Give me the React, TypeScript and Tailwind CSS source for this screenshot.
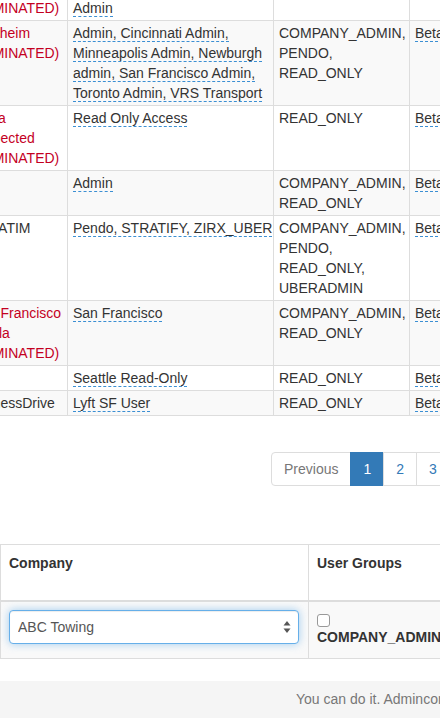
import React from "react";

type Row = { company: string[]; groups: string; roles: string[]; beta: boolean };

const rows: Row[] = [
  { company: ["(TERMINATED)"], groups: "Admin", roles: [], beta: false },
  {
    company: ["L. Anaheim", "(TERMINATED)"],
    groups: "Admin, Cincinnati Admin, Minneapolis Admin, Newburgh admin, San Francisco Admin, Toronto Admin, VRS Transport",
    roles: ["COMPANY_ADMIN", "PENDO", "READ_ONLY"],
    beta: true,
  },
  { company: ["Omaha", "Unexpected", "(TERMINATED)"], groups: "Read Only Access", roles: ["READ_ONLY"], beta: true },
  { company: [], groups: "Admin", roles: ["COMPANY_ADMIN", "READ_ONLY"], beta: true },
  { company: ["VERBATIM"], groups: "Pendo, STRATIFY, ZIRX_UBER", roles: ["COMPANY_ADMIN", "PENDO", "READ_ONLY", "UBERADMIN"], beta: true },
  { company: ["1 San Francisco", "Marcela", "(TERMINATED)"], groups: "San Francisco", roles: ["COMPANY_ADMIN", "READ_ONLY"], beta: true },
  { company: [], groups: "Seattle Read-Only", roles: ["READ_ONLY"], beta: true },
  { company: ["SlickinessDrive"], groups: "Lyft SF User", roles: ["READ_ONLY"], beta: true },
];

// names that are active companies are shown in the normal text colour
const active = ["VERBATIM", "SlickinessDrive"];

function Dashed({ children }: { children: React.ReactNode }) {
  return <span className="border-b border-dashed border-[#3b8fd3]">{children}</span>;
}

export default function App() {
  return (
    <div className="h-[718px] w-[440px] overflow-hidden bg-white font-['Liberation_Sans',Arial,sans-serif] text-[14px] leading-5 text-[#333]">
      <table className="-ml-[46px] -mt-[5px] w-[605px] table-fixed border-collapse">
        <colgroup>
          <col className="w-[113px]" />
          <col className="w-[206px]" />
          <col className="w-[136px]" />
          <col className="w-[150px]" />
        </colgroup>
        <tbody>
          {rows.map((row, i) => (
            <tr key={i} className={i % 2 === 1 ? "bg-[#f9f9f9]" : "bg-white"}>
              <td className="whitespace-nowrap border border-[#ddd] px-[5px] py-[2px] align-top text-[#c4001f]">
                {row.company.map((line, j) => (
                  <div key={j} className={active.includes(line) ? "text-[#333]" : ""}>
                    {line}
                  </div>
                ))}
              </td>
              <td className="border border-[#ddd] py-[2px] pl-[5px] pr-0 align-top">
                <Dashed>{row.groups}</Dashed>
              </td>
              <td className="border border-[#ddd] px-[5px] py-[2px] align-top whitespace-nowrap">
                {row.roles.map((role, j) => (
                  <div key={role}>
                    {role}
                    {j < row.roles.length - 1 ? "," : ""}
                  </div>
                ))}
              </td>
              <td className="border border-[#ddd] px-[5px] py-[2px] align-top">
                {row.beta && <Dashed>Beta Testers</Dashed>}
              </td>
            </tr>
          ))}
        </tbody>
      </table>

      <div className="mt-[36px] flex pl-[271px]">
        <span className="rounded-l-[4px] border border-[#ddd] px-3 py-[6px] text-[#777]">Previous</span>
        <span className="-ml-px border border-[#337ab7] bg-[#337ab7] px-3 py-[6px] text-white">1</span>
        <span className="-ml-px border border-[#ddd] px-3 py-[6px] text-[#337ab7]">2</span>
        <span className="-ml-px border border-[#ddd] px-3 py-[6px] text-[#337ab7]">3</span>
        <span className="-ml-px border border-[#ddd] px-3 py-[6px] text-[#337ab7]">4</span>
      </div>

      <table className="mt-[58px] w-[620px] table-fixed border-collapse">
        <colgroup>
          <col className="w-[308px]" />
          <col className="w-[312px]" />
        </colgroup>
        <thead>
          <tr>
            <th className="border border-b-2 border-[#ddd] px-2 pb-2 pt-2 text-left align-top font-bold">
              <div className="h-[39px]">Company</div>
            </th>
            <th className="border border-b-2 border-[#ddd] px-2 pb-2 pt-2 text-left align-top font-bold">
              <div className="h-[39px]">User Groups</div>
            </th>
          </tr>
        </thead>
        <tbody>
          <tr className="h-[57px] bg-[#f9f9f9]">
            <td className="border border-[#ddd] p-2 align-top">
              <div className="relative">
                <select
                  defaultValue="ABC Towing"
                  className="h-[34px] w-[290px] appearance-none rounded-[4px] border border-[#66afe9] bg-white px-2 text-[14px] text-[#555] shadow-[inset_0_1px_1px_rgba(0,0,0,0.075),0_0_8px_rgba(102,175,233,0.6)] outline-none"
                >
                  <option>ABC Towing</option>
                </select>
                <svg className="pointer-events-none absolute right-[9px] top-[10px]" width="8" height="14" viewBox="0 0 8 14">
                  <path d="M4 1 L7.5 5.5 H0.5 Z" fill="#555" />
                  <path d="M4 13 L7.5 8.5 H0.5 Z" fill="#555" />
                </svg>
              </div>
            </td>
            <td className="border border-[#ddd] p-2 align-top">
              <div className="mt-[4px] h-[13px] w-[13px] rounded-[3px] border border-[#999] bg-white" />
              <div className="whitespace-nowrap font-bold">COMPANY_ADMIN</div>
            </td>
          </tr>
        </tbody>
      </table>

      <div className="mt-[22px] h-[40px] whitespace-nowrap bg-[#f5f5f5] pl-[296px] pt-2 text-[#777]">
        You can do it. Admincontrol
      </div>
    </div>
  );
}
